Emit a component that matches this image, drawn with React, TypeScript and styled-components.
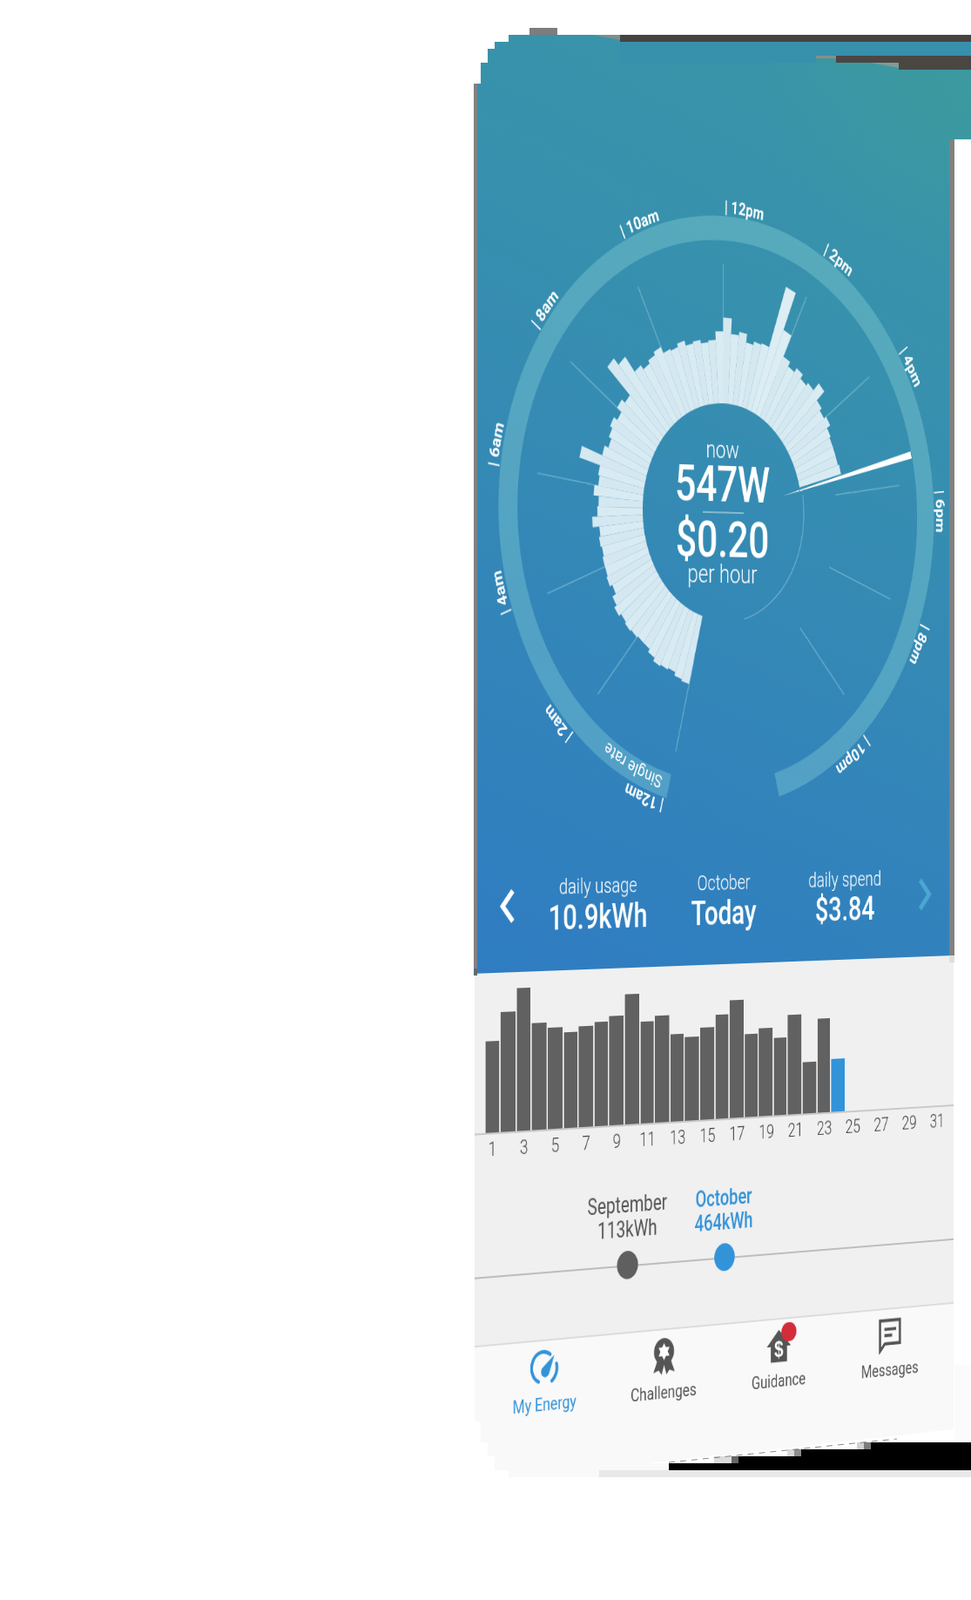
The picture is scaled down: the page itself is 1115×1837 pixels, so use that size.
import React from "react";
import styled, { createGlobalStyle } from "styled-components";

const GlobalStyle = createGlobalStyle`
  html, body { margin: 0; padding: 0; background: #fff; }
  body { font-family: Roboto, "Liberation Sans", sans-serif; }
`;

const Page = styled.div`
  position: relative;
  width: 1115px;
  height: 1837px;
  overflow: hidden;
  background: #fff;
`;

const Phone = styled.div`
  width: 375px;
  height: 812px;
  display: flex;
  flex-direction: column;
  overflow: hidden;
  transform-origin: 0 0;
  transform: matrix3d(1.68179, 0.15971, 0, 0.00019645, 0, 2.06404, 0, 0, 0, 0, 1, 0, 545, 26, 0, 1);
`;

const Hero = styled.section`
  position: relative;
  height: 529px;
  flex: none;
  color: #fff;
  background:
    radial-gradient(ellipse 160px 120px at 100% 0%, rgba(61, 155, 156, 0.75), rgba(61, 155, 156, 0)),
    linear-gradient(198deg, #3a95a6 0%, #3790ae 32%, #2f7cc2 100%);
`;

const DialSvg = styled.svg`
  display: block;
  width: 375px;
  height: 455px;
`;

const Readout = styled.div`
  position: absolute;
  left: 137.5px;
  top: 225.2px;
  width: 100px;
  display: flex;
  flex-direction: column;
  align-items: center;
  text-align: center;
`;

const ReadoutCaption = styled.div<{ $wide?: boolean }>`
  font-size: ${(p) => (p.$wide ? 15 : 14)}px;
  line-height: ${(p) => (p.$wide ? 16 : 15)}px;
  font-weight: 300;
`;

const ReadoutValue = styled.div`
  font-size: 29px;
  line-height: 24px;
  font-weight: 500;
  letter-spacing: -0.2px;
`;

const ReadoutRule = styled.div`
  width: 32px;
  height: 1px;
  margin: 3.5px 0;
  background: rgba(255, 255, 255, 0.4);
`;

const SummaryRow = styled.div`
  display: grid;
  grid-template-columns: 43.5px 96.5px 97px 96.5px 41.5px;
  align-items: center;
  margin-top: 19px;
`;

const SummaryCell = styled.div`
  display: flex;
  flex-direction: column;
  align-items: center;
`;

const SummaryLabel = styled.div`
  font-size: 12px;
  line-height: 16px;
  font-weight: 300;
`;

const SummaryValue = styled.div`
  font-size: 19px;
  line-height: 18px;
  margin-top: 0.8px;
  font-weight: 500;
`;

const Chevron = styled.svg<{ $tone: string }>`
  display: block;
  justify-self: center;
  width: 12px;
  height: 20px;
  margin-top: 2px;
  fill: none;
  stroke: ${(p) => p.$tone};
  stroke-width: 3;
`;

const PrevChevron = styled(Chevron)`
  margin-left: 4px;
`;

const NextChevron = styled(Chevron)`
  margin-right: 7px;
`;

const ChartSection = styled.section`
  height: 207px;
  flex: none;
  padding-top: 9px;
  box-sizing: border-box;
  background: #f0f0f0;
`;

const Bars = styled.div`
  height: 80px;
  display: flex;
  align-items: flex-end;
  gap: 1px;
  padding-left: 7.6px;
  border-bottom: 1px solid #c9c9c9;
  margin-bottom: -1px;
`;

const Bar = styled.div<{ $today?: boolean }>`
  width: 10.6px;
  flex: none;
  background: ${(p) => (p.$today ? "#3393d9" : "#616161")};
`;

const DayLabels = styled.div`
  display: flex;
  padding-left: 7.3px;
  height: 16px;
  margin-top: 1.5px;
`;

const DayLabel = styled.div`
  width: 23.2px;
  flex: none;
  box-sizing: border-box;
  padding-right: 11.6px;
  text-align: center;
  font-size: 11px;
  line-height: 16px;
  font-weight: 300;
  color: #444;
`;

const Compare = styled.div`
  display: grid;
  grid-template-columns: 75px 74px;
  justify-content: start;
  padding-left: 76.5px;
  margin-top: 21px;
`;

const CompareLabel = styled.div<{ $active?: boolean }>`
  text-align: center;
  font-size: 12.5px;
  line-height: 14.5px;
  font-weight: ${(p) => (p.$active ? 500 : 400)};
  color: ${(p) => (p.$active ? "#3393d9" : "#555")};
`;

const Track = styled.div`
  position: relative;
  display: grid;
  grid-template-columns: 75px 74px;
  padding-left: 76.5px;
  height: 16px;
  margin-top: 4.5px;
  &::before {
    content: "";
    position: absolute;
    left: 0;
    right: 0;
    top: 7.5px;
    height: 1px;
    background: #bdbdbd;
  }
`;

const Dot = styled.div<{ $tone: string }>`
  position: relative;
  justify-self: center;
  width: 16px;
  height: 16px;
  border-radius: 50%;
  background: ${(p) => p.$tone};
`;

const TabBar = styled.nav`
  flex: 1;
  display: grid;
  grid-template-columns: repeat(4, 1fr);
  padding: 3.5px 8px 0 6.5px;
  background: #f9f9f9;
  border-top: 1px solid #dcdcdc;
`;

const Tab = styled.div<{ $active?: boolean }>`
  display: flex;
  flex-direction: column;
  align-items: center;
  color: ${(p) => (p.$active ? "#3393d9" : "#555")};
`;

const TabIcon = styled.div`
  position: relative;
  width: 22px;
  height: 22px;
  display: flex;
  align-items: center;
  justify-content: center;
`;

const TabGlyph = styled.svg`
  display: block;
  width: 22px;
  height: 22px;
`;

const AlertDot = styled.span`
  position: absolute;
  right: -3px;
  top: -2px;
  width: 11.5px;
  height: 11.5px;
  border-radius: 50%;
  background: #d22d3a;
`;

const TabLabel = styled.div`
  font-size: 10.3px;
  line-height: 14px;
  margin-top: 3px;
  font-weight: 400;
`;

const EdgeLayer = styled.svg`
  position: absolute;
  left: 0;
  top: 0;
  width: 1115px;
  height: 1837px;
  pointer-events: none;
`;

const CX = 188;
const CY = 268;
const STEP = 330 / 96;

const RADII = [
  103, 102, 100, 101, 102, 100, 98, 98, 99, 100, 99, 101, 99, 96, 98, 97, 97, 96, 97, 96, 101, 97, 96, 100,
  97, 98, 114, 98, 95, 97, 99, 96, 100, 97, 120, 115, 104, 101, 103, 105, 101, 100, 102, 99, 100, 98,
  99, 104, 112, 103, 105, 100, 102, 103, 141, 117, 103, 100, 103, 100, 102, 108, 100, 98, 100, 97, 96, 96, 96,
  97,
];

const HOUR_LABELS = ["12am", "2am", "4am", "6am", "8am", "10am", "12pm", "2pm", "4pm", "6pm", "8pm", "10pm"];
const LABEL_NUDGE = [0, -1, -0.7, -0.9, -0.4, 0.3, 0, -0.4, 0, 1.7, 1, 0.7];

const DAILY = [
  51, 67, 80, 60, 57.5, 54, 57, 59, 62, 74, 58, 61, 50, 48, 53, 60, 68, 48, 51, 45, 58, 30, 55,
];

const polar = (deg: number, r: number): [number, number] => {
  const a = (deg * Math.PI) / 180;
  return [CX + r * Math.sin(a), CY - r * Math.cos(a)];
};

const pt = (p: [number, number]) => `${p[0].toFixed(2)},${p[1].toFixed(2)}`;

const arc = (from: number, to: number, r: number) => {
  const [x1, y1] = polar(from, r);
  const [x2, y2] = polar(to, r);
  const large = (to - from + 360) % 360 > 180 ? 1 : 0;
  return `M${x1.toFixed(2)} ${y1.toFixed(2)} A${r} ${r} 0 ${large} 1 ${x2.toFixed(2)} ${y2.toFixed(2)}`;
};

const LABEL_R = 172.5;
const RATE_R = 159.5;
const circlePath = (r: number) =>
  `M${CX} ${CY - r} A${r} ${r} 0 1 1 ${CX} ${CY + r} A${r} ${r} 0 1 1 ${CX} ${CY - r}`;

const offsetFor = (deg: number, r: number) => ((((deg + 360) % 360) * Math.PI) / 180) * r;

const Dial = () => (
  <DialSvg viewBox="0 0 375 455" fontFamily='Roboto, "Liberation Sans", sans-serif'>
    <defs>
      <path id="labelArc" d={circlePath(LABEL_R)} />
      <path id="rateArc" d={circlePath(RATE_R)} />
    </defs>
    <path d={arc(195, 165, 163.5)} fill="none" stroke="#9fe3e0" strokeOpacity="0.3" strokeWidth="14" />
    {HOUR_LABELS.map((_, i) => {
      const deg = 195 + i * 27.5;
      const [x1, y1] = polar(deg, 90);
      const [x2, y2] = polar(deg, 143);
      return <line key={i} x1={x1} y1={y1} x2={x2} y2={y2} stroke="#bfe9ee" strokeOpacity="0.35" strokeWidth="0.8" />;
    })}
    <path d={arc(80, 165, 64)} fill="none" stroke="#fff" strokeOpacity="0.3" strokeWidth="0.7" />
    {RADII.map((r, i) => {
      const a = 195 + i * STEP;
      const b = a + STEP;
      return (
        <polygon
          key={i}
          points={[polar(a, 62.5), polar(a, r), polar(b, r), polar(b, 62.5)].map(pt).join(" ")}
          fill="#dfeef4"
          opacity={i === 54 || i === 55 ? 0.99 : i % 2 ? 0.97 : 0.94}
        />
      );
    })}
    <polygon points={[polar(77.8, 48), polar(77.1, 156), polar(75.5, 156)].map(pt).join(" ")} fill="#fff" />
    <g fill="#fff" fontSize="10" fontWeight="700">
      {HOUR_LABELS.map((label, i) => (
        <text key={label}>
          <textPath href="#labelArc" startOffset={offsetFor(195 + i * 27.5 + LABEL_NUDGE[i], LABEL_R) + 1}>
            {`| ${label}`}
          </textPath>
        </text>
      ))}
      <text fontSize="10" fontWeight="400">
        <textPath href="#rateArc" startOffset={offsetFor(197, RATE_R)}>
          Single rate
        </textPath>
      </text>
    </g>
  </DialSvg>
);

const GaugeIcon = () => (
  <TabGlyph viewBox="0 0 24 24">
    <path
      d="M6.55 20.28A9.5 9.5 0 1 1 16 3.9M21.18 10.04A9.5 9.5 0 0 1 17.45 20.28"
      fill="none"
      stroke="currentColor"
      strokeWidth="2.3"
      strokeLinecap="round"
    />
    <path d="M19.5 4.5L15.2 15.6A3.4 3.4 0 1 1 9.6 12Z" fill="currentColor" />
  </TabGlyph>
);

const RibbonIcon = () => (
  <TabGlyph viewBox="0 0 24 24">
    <path d="M7 13L3 22L7.5 20.5L10 23.5L12 17L14 23.5L16.5 20.5L21 22L17 13Z" fill="currentColor" />
    <circle cx="12" cy="9" r="8.4" fill="currentColor" />
    <polygon points="12,3.6 16.6,11.7 7.4,11.7" fill="#fff" />
    <polygon points="12,14.4 7.4,6.3 16.6,6.3" fill="#fff" />
  </TabGlyph>
);

const HouseIcon = () => (
  <TabGlyph viewBox="0 0 24 24">
    <path d="M12 2L1.5 12.5H5V22.5H19V12.5H22.5Z" fill="currentColor" />
    <text x="12" y="19" textAnchor="middle" fontSize="14" fontWeight="700" fill="#fff" fontFamily='"Liberation Sans", sans-serif'>
      $
    </text>
  </TabGlyph>
);

const MessageIcon = () => (
  <TabGlyph viewBox="0 0 24 24">
    <path d="M3.2 2.5H21V17.5H7.5L3.2 22Z" fill="none" stroke="currentColor" strokeWidth="2" strokeLinejoin="miter" />
    <path d="M7 8.2H17.5M7 12.2H14" fill="none" stroke="currentColor" strokeWidth="2" />
  </TabGlyph>
);

const Edges = () => (
  <EdgeLayer viewBox="0 0 1115 1837">
    <defs>
      <linearGradient id="rightBand" x1="0" y1="0" x2="0" y2="1">
        <stop offset="0" stopColor="#3c9a9f" />
        <stop offset="1" stopColor="#3b98a1" />
      </linearGradient>
    </defs>
    <rect x="0" y="0" width="1115" height="40" fill="#fff" />
    <rect x="608" y="32" width="32" height="8" fill="#7d7d7d" />
    <polygon points="680,40 712,40 712,46" fill="#7e8f8e" />
    <rect x="712" y="48" width="403" height="24" fill="#3790ac" />
    <rect x="712" y="40" width="403" height="8" fill="#45433f" />
    <polygon points="937,64 960,64 960,72 937,67" fill="#8c8f88" />
    <rect x="937" y="67" width="23" height="5" fill="#3a96a2" />
    <rect x="960" y="72" width="72" height="8" fill="#3b98a1" />
    <polygon points="1000,72 1032,72 1032,78" fill="#7e9c98" />
    <rect x="960" y="64" width="155" height="8" fill="#4a4743" />
    <rect x="1032" y="72" width="83" height="8" fill="#4a4743" />
    <rect x="1090" y="80" width="25" height="80" fill="url(#rightBand)" />

    <rect x="530" y="40" width="54" height="8" fill="#fff" />
    <rect x="530" y="48" width="38" height="8" fill="#fff" />
    <rect x="530" y="56" width="30" height="16" fill="#fff" />
    <rect x="530" y="72" width="22" height="24" fill="#fff" />
    <rect x="544" y="96" width="4" height="1016" fill="#818181" />
    <rect x="544" y="1112" width="4" height="8" fill="#5e6a70" />
    <rect x="1090" y="160" width="6" height="937" fill="#818181" />
    <rect x="1090" y="1097" width="6" height="8" fill="#dedede" />
    <rect x="1096" y="1567" width="19" height="90" fill="#fbfbfb" />

    <rect x="530" y="1632" width="22" height="24" fill="#fff" />
    <rect x="530" y="1656" width="30" height="16" fill="#fff" />
    <rect x="530" y="1672" width="38" height="16" fill="#fff" />
    <rect x="530" y="1688" width="54" height="8" fill="#fff" />
    <rect x="584" y="1680" width="184" height="16" fill="#f9f9f9" />
    <rect x="688" y="1688" width="427" height="8" fill="#e8e8e8" />
    <rect x="768" y="1680" width="347" height="8" fill="#000" />
    <rect x="848" y="1672" width="267" height="8" fill="#000" />
    <rect x="920" y="1664" width="195" height="8" fill="#000" />
    <rect x="1000" y="1656" width="115" height="8" fill="#000" />
    <rect x="820" y="1672" width="20" height="8" fill="#dcdcdc" />
    <rect x="840" y="1672" width="8" height="8" fill="#666" />
    <rect x="904" y="1664" width="8" height="8" fill="#d8d8d8" />
    <rect x="912" y="1664" width="8" height="8" fill="#8c8c8c" />
    <rect x="984" y="1656" width="8" height="8" fill="#d2d2d2" />
    <rect x="992" y="1656" width="8" height="8" fill="#7c7c7c" />
    <path d="M768 1679L1030 1652" stroke="#555" strokeWidth="0.7" strokeDasharray="7 6" fill="none" />
    <rect x="530" y="1696" width="585" height="141" fill="#fff" />
  </EdgeLayer>
);

export default function App() {
  return (
    <Page>
      <GlobalStyle />
      <Phone>
        <Hero>
          <Dial />
          <Readout>
            <ReadoutCaption>now</ReadoutCaption>
            <ReadoutValue>547W</ReadoutValue>
            <ReadoutRule />
            <ReadoutValue>$0.20</ReadoutValue>
            <ReadoutCaption $wide>per hour</ReadoutCaption>
          </Readout>
          <SummaryRow>
            <PrevChevron $tone="#fff" viewBox="0 0 12 20">
              <polyline points="10,1.5 2.5,10 10,18.5" />
            </PrevChevron>
            <SummaryCell>
              <SummaryLabel>daily usage</SummaryLabel>
              <SummaryValue>10.9kWh</SummaryValue>
            </SummaryCell>
            <SummaryCell>
              <SummaryLabel>October</SummaryLabel>
              <SummaryValue>Today</SummaryValue>
            </SummaryCell>
            <SummaryCell>
              <SummaryLabel>daily spend</SummaryLabel>
              <SummaryValue>$3.84</SummaryValue>
            </SummaryCell>
            <NextChevron $tone="#4aa8d0" viewBox="0 0 12 20">
              <polyline points="2,1.5 9.5,10 2,18.5" />
            </NextChevron>
          </SummaryRow>
        </Hero>
        <ChartSection>
          <Bars>
            {DAILY.map((h, i) => (
              <Bar key={i} style={{ height: h }} />
            ))}
            <Bar $today style={{ height: 31 }} />
          </Bars>
          <DayLabels>
            {Array.from({ length: 16 }, (_, i) => (
              <DayLabel key={i}>{i * 2 + 1}</DayLabel>
            ))}
          </DayLabels>
          <Compare>
            <CompareLabel>
              September
              <br />
              113kWh
            </CompareLabel>
            <CompareLabel $active>
              October
              <br />
              464kWh
            </CompareLabel>
          </Compare>
          <Track>
            <Dot $tone="#5f5f5f" />
            <Dot $tone="#3393d9" />
          </Track>
        </ChartSection>
        <TabBar>
          <Tab $active>
            <TabIcon>
              <GaugeIcon />
            </TabIcon>
            <TabLabel>My Energy</TabLabel>
          </Tab>
          <Tab>
            <TabIcon>
              <RibbonIcon />
            </TabIcon>
            <TabLabel>Challenges</TabLabel>
          </Tab>
          <Tab>
            <TabIcon>
              <HouseIcon />
              <AlertDot />
            </TabIcon>
            <TabLabel>Guidance</TabLabel>
          </Tab>
          <Tab>
            <TabIcon>
              <MessageIcon />
            </TabIcon>
            <TabLabel>Messages</TabLabel>
          </Tab>
        </TabBar>
      </Phone>
      <Edges />
    </Page>
  );
}
